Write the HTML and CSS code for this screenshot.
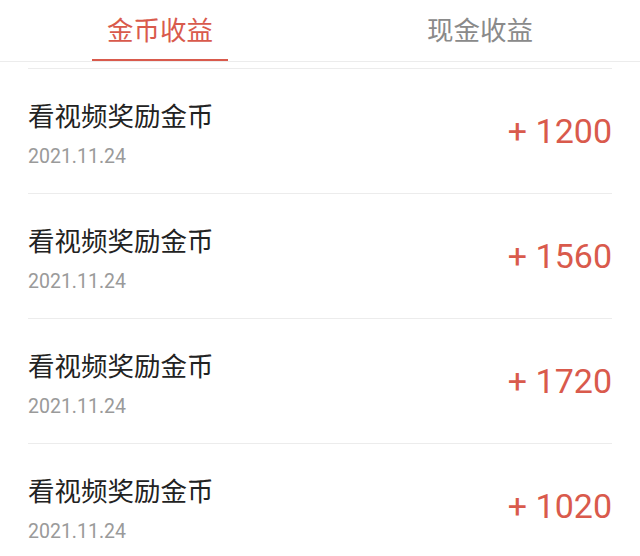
FILE: index.html
```html
<!DOCTYPE html>
<html lang="zh-CN">
<head>
<meta charset="utf-8">
<title>金币收益</title>
<link rel="stylesheet" href="styles.css">
</head>
<body>
<div class="tabs">
  <div class="tab active"><span class="tab-label">金币收益</span></div>
  <div class="tab"><span class="tab-label">现金收益</span></div>
</div>
<ul class="list">
  <li class="row">
    <div class="info"><div class="title">看视频奖励金币</div><div class="date">2021.11.24</div></div>
    <div class="amount">+ 1200</div>
  </li>
  <li class="row">
    <div class="info"><div class="title">看视频奖励金币</div><div class="date">2021.11.24</div></div>
    <div class="amount">+ 1560</div>
  </li>
  <li class="row">
    <div class="info"><div class="title">看视频奖励金币</div><div class="date">2021.11.24</div></div>
    <div class="amount">+ 1720</div>
  </li>
  <li class="row">
    <div class="info"><div class="title">看视频奖励金币</div><div class="date">2021.11.24</div></div>
    <div class="amount">+ 1020</div>
  </li>
</ul>
</body>
</html>
```
FILE: styles.css
```css
html, body {
  margin: 0;
  padding: 0;
  background: #ffffff;
  overflow: hidden;
}
body {
  width: 640px;
  height: 556px;
  font-family: "Noto Sans CJK SC", "Noto Sans", sans-serif;
}
.tabs {
  display: flex;
  height: 61px;
  border-bottom: 1px solid #ececec;
}
.tab {
  flex: 1;
  display: flex;
  justify-content: center;
}
.tab-label {
  display: block;
  padding: 15px 15px 0;
  height: 44px;
  font-size: 26.5px;
  line-height: 27px;
  color: #8a8a8a;
  border-bottom: 2px solid transparent;
}
.tab.active .tab-label {
  color: #d95a4c;
  border-bottom-color: #d95a4c;
}
.list {
  list-style: none;
  margin: 6px 28px 0;
  padding: 0;
}
.row {
  display: flex;
  justify-content: space-between;
  align-items: center;
  height: 124px;
  border-top: 1px solid #ececec;
}
.info {
  align-self: flex-start;
  padding-top: 31px;
}
.title {
  font-size: 26.5px;
  line-height: 30px;
  color: #222222;
}
.date {
  margin-top: 15px;
  font-family: Roboto, "Noto Sans", sans-serif;
  font-size: 19.5px;
  line-height: 24px;
  color: #9a9a9a;
}
.amount {
  font-family: Roboto, "Noto Sans", sans-serif;
  font-size: 34px;
  line-height: 40px;
  color: #d95a4c;
}
```
